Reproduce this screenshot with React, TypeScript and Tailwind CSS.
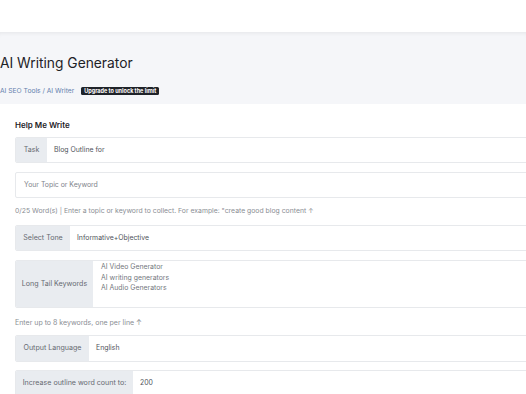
function Row({ label, value, labelW, tall }: { label: string; value: string; labelW: string; tall?: boolean }) {
  return (
    <div className={`flex w-[600px] overflow-hidden rounded-[2px] border border-[#e7e9ec] bg-white ${tall ? "h-[27px]" : "h-[26px]"}`}>
      <div className={`flex shrink-0 items-center justify-center bg-[#e9ecf0] text-[7.1px] text-[#666a71]`}>
        <div className={`text-center ${labelW}`}>{label}</div>
      </div>
      <div className="flex items-center pl-[7px] text-[6.9px] text-[#50545b]">{value}</div>
    </div>
  );
}

export default function App() {
  return (
    <div className="h-[394px] w-[526px] overflow-hidden bg-white font-['Inter',sans-serif]">
      <div className="h-8 bg-white" />

      <div className="h-[72px] bg-[#f5f6f9] pt-[21px] shadow-[inset_0_4px_4px_-3px_rgba(0,0,0,0.07)]">
        <h1 className="text-[13.8px] leading-[20px] text-[#1e2227]">AI Writing Generator</h1>
        <div className="mt-[13px] flex h-[10px] items-center gap-[7px]">
          <span className="text-[6.7px] text-[#6481ad]">AI SEO Tools / AI Writer</span>
          <span className="flex h-[8px] items-center rounded-[1.5px] bg-[#1f2329] px-[3px] text-[5.5px] font-bold text-white">
            Upgrade to unlock the limit
          </span>
        </div>
      </div>

      <div className="pl-[15px]">
        <div className="pt-[15px] text-[8px] font-semibold leading-[12px] text-[#1e2227]">Help Me Write</div>

        <div className="mt-[6px]">
          <Row label="Task" value="Blog Outline for" labelW="w-[31px]" />
        </div>

        <div className="mt-[9px] flex h-[26px] w-[600px] items-center rounded-[2px] border border-[#e7e9ec] pl-[8px] text-[6.9px] text-[#80848a]">
          Your Topic or Keyword
        </div>

        <div className="mt-[8px] text-[6.85px] leading-[10px] text-[#8a8e94]">
          0/25 Word(s) | Enter a topic or keyword to collect. For example: "create good blog content ↑
        </div>

        <div className="mt-[9px]">
          <Row label="Select Tone" value="Informative+Objective" labelW="w-[54px]" />
        </div>

        <div className="mt-[9px] flex h-[48px] w-[600px] overflow-hidden rounded-[2px] border border-[#e7e9ec]">
          <div className="flex w-[77px] shrink-0 items-center justify-center bg-[#e9ecf0] text-[7.1px] text-[#666a71]">
            Long Tail Keywords
          </div>
          <div className="pl-[8px] pt-[1px] text-[6.9px] leading-[10.5px] text-[#73777e]">
            <div>AI Video Generator</div>
            <div>AI writing generators</div>
            <div>AI Audio Generators</div>
          </div>
        </div>

        <div className="mt-[10px] text-[7px] leading-[10px] text-[#8a8e94]">Enter up to 8 keywords, one per line ↑</div>

        <div className="mt-[7px]">
          <Row label="Output Language" value="English" labelW="w-[73px]" tall />
        </div>

        <div className="mt-[8px]">
          <Row label="Increase outline word count to:" value="200" labelW="w-[117px]" tall />
        </div>
      </div>
    </div>
  );
}
